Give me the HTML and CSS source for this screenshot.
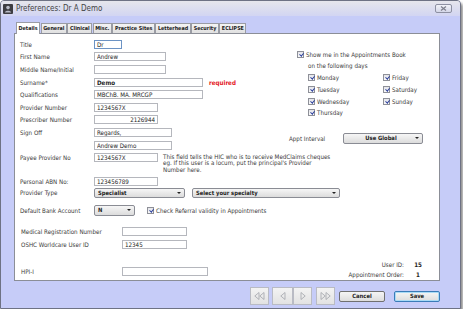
FILE: index.html
```html
<!DOCTYPE html>
<html lang="en">
<head>
  <meta charset="UTF-8" />
  <title>Preferences: Dr A Demo</title>
  <link rel="stylesheet" href="styles.css">
</head>
<body>

  <div class="window">
    <div class="titlebar">
      <svg class="app-icon" width="10" height="10" viewBox="0 0 10 10">
        <rect x="0" y="0" width="10" height="10" rx="1" fill="#3d3d42"/>
        <circle cx="5" cy="3.6" r="1.8" fill="#b9bcc8"/>
        <path d="M1.8 8.6 C2.2 6.2 7.8 6.2 8.2 8.6 Z" fill="#b9bcc8"/>
      </svg>
      <span class="title">Preferences: Dr A Demo</span>
      <span class="close">
        <svg width="7" height="5" viewBox="0 0 7 5"><path d="M1 0.5 L6 4.5 M6 0.5 L1 4.5" stroke="#7d7f8c" stroke-width="1.2"/></svg>
      </span>
    </div>

    <!-- Tabs -->
    <div class="tabs">
      <span class="tab active">Details</span>
      <span class="tab">General</span>
      <span class="tab">Clinical</span>
      <span class="tab">Misc.</span>
      <span class="tab">Practice Sites</span>
      <span class="tab">Letterhead</span>
      <span class="tab">Security</span>
      <span class="tab">ECLIPSE</span>
    </div>

    <div class="panel">
      <div class="top">
        <div class="form-grid">
          <label>Title</label>
          <div><input class="w-title focus" value="Dr"></div>
          <label>First Name</label>
          <div><input class="w-name" value="Andrew"></div>
          <label>Middle Name/Initial</label>
          <div><input class="w-name" value=""></div>
          <label>Surname*</label>
          <div class="cell"><input class="w-long bold" value="Demo"><span class="required">required</span></div>
          <label>Qualifications</label>
          <div><input class="w-long" value="MBChB. MA. MRCGP"></div>
          <label>Provider Number</label>
          <div><input class="w-num" value="1234567X"></div>
          <label>Prescriber Number</label>
          <div><input class="w-num right" value="2126944"></div>
          <label>Sign Off</label>
          <div><input class="w-sign" value="Regards,"></div>
          <label></label>
          <div><input class="w-sign" value="Andrew Demo"></div>
        </div>

        <div class="appt">
          <div class="show"><span class="cb"></span>Show me in the Appointments Book</div>
          <div class="show-sub">on the following days</div>
          <div class="days">
            <div class="day"><span class="cb"></span>Monday</div>
            <div class="day"><span class="cb"></span>Friday</div>
            <div class="day"><span class="cb"></span>Tuesday</div>
            <div class="day"><span class="cb"></span>Saturday</div>
            <div class="day"><span class="cb"></span>Wednesday</div>
            <div class="day"><span class="cb"></span>Sunday</div>
            <div class="day"><span class="cb"></span>Thursday</div>
          </div>
          <div class="interval">
            <label>Appt Interval</label>
            <div class="select w-interval"><span>Use Global</span><i class="caret"></i></div>
          </div>
        </div>
      </div>

      <div class="row payee">
        <label>Payee Provider No</label>
        <input class="w-num" value="1234567X">
        <p class="note">This field tells the HIC who is to receive MedClaims cheques<br>
          eg. If this user is a locum, put the principal's Provider<br>
          Number here.</p>
      </div>
      <div class="row abn">
        <label>Personal ABN No:</label>
        <input class="w-num" value="123456789">
      </div>
      <div class="row ptype">
        <label>Provider Type</label>
        <div class="select w-spec left"><span>Specialist</span><i class="caret"></i></div>
        <div class="select w-specialty left"><span>Select your specialty</span><i class="caret"></i></div>
      </div>
      <div class="row bank">
        <label>Default Bank Account</label>
        <div class="select w-bank left"><span>N</span><i class="caret"></i></div>
        <span class="cb"></span><span class="cb-text">Check Referral validity in Appointments</span>
      </div>

      <div class="lower">
        <div class="lower-left">
          <div class="lrow med">
            <label>Medical Registration Number</label>
            <input class="w-reg" value="">
          </div>
          <div class="lrow oshc">
            <label>OSHC Worldcare User ID</label>
            <input class="w-reg" value="12345">
          </div>
          <div class="lrow hpi">
            <label>HPI-I</label>
            <input class="w-hpi" value="">
          </div>
        </div>
        <div class="user-info">
          <span class="k">User ID:</span><b>15</b>
          <span class="k">Appointment Order:</span><b>1</b>
        </div>
      </div>
    </div>

    <div class="footer">
      <button class="nav first">
        <svg width="11" height="8" viewBox="0 0 11 8"><path d="M5 0.5 L0.8 4 L5 7.5 Z M10 0.5 L5.8 4 L10 7.5 Z" fill="none" stroke="#a2a4ab" stroke-width="0.8"/></svg>
      </button>
      <button class="nav prev">
        <svg width="6" height="8" viewBox="0 0 6 8"><path d="M5 0.5 L0.8 4 L5 7.5 Z" fill="none" stroke="#a2a4ab" stroke-width="0.8"/></svg>
      </button>
      <button class="nav next">
        <svg width="6" height="8" viewBox="0 0 6 8"><path d="M1 0.5 L5.2 4 L1 7.5 Z" fill="none" stroke="#a2a4ab" stroke-width="0.8"/></svg>
      </button>
      <button class="nav last">
        <svg width="11" height="8" viewBox="0 0 11 8"><path d="M1 0.5 L5.2 4 L1 7.5 Z M6 0.5 L10.2 4 L6 7.5 Z" fill="none" stroke="#a2a4ab" stroke-width="0.8"/></svg>
      </button>
      <button class="btn cancel">Cancel</button>
      <button class="btn save">Save</button>
    </div>
  </div>

</body>
</html>
```

FILE: styles.css
```css
body {
  margin: 0;
  padding: 0;
  font-family: 'DejaVu Sans Condensed', 'DejaVu Sans', sans-serif;
  font-size: 6.2px;
  color: #3a3a3a;
  background: #fff;
}

.window {
  width: 461px;
  height: 309px;
  box-sizing: border-box;
  border: 1px solid #6e7284;
  border-radius: 4px 4px 0 0;
  background: #c6ccf8;
  box-shadow: 2px 3px 3px rgba(0,0,0,0.45);
  display: flex;
  flex-direction: column;
}

/* Titulek */
.titlebar {
  height: 15px;
  display: flex;
  align-items: center;
  padding: 0 8px 0 2px;
  background: linear-gradient(#e6e6ec, #d2d5f2);
  border-radius: 3px 3px 0 0;
}

.app-icon {
  margin-right: 3px;
}

.title {
  font-family: 'DejaVu Sans Condensed', 'DejaVu Sans', sans-serif;
  font-size: 8px;
  color: #444;
}

.close {
  margin-left: auto;
  width: 17px;
  height: 9px;
  box-sizing: border-box;
  border: 1px solid #8d90a2;
  border-radius: 2px;
  background: linear-gradient(#f1f2f8, #d4d7e8);
  display: flex;
  align-items: center;
  justify-content: center;
}

/* Zalozky */
.tabs {
  display: flex;
  align-items: flex-end;
  margin-top: 6px;
  padding-left: 15px;
  height: 11px;
  position: relative;
  z-index: 1;
}

.tab {
  height: 9px;
  line-height: 9px;
  padding: 0 1.5px;
  border: 1px solid #9a9ca4;
  border-bottom: none;
  background: linear-gradient(#f4f4f4, #e0e0e0);
  font-weight: bold;
  font-size: 5.4px;
  color: #222;
  margin-right: 0.5px;
}

.tab.active {
  height: 11px;
  line-height: 10px;
  background: #fff;
  margin-bottom: -1px;
}

.panel {
  margin: 0 20px 0 13px;
  height: 248px;
  box-sizing: border-box;
  background: #fff;
  border: 1px solid #8b8e97;
  padding: 4px 0 0 5px;
  display: flex;
  flex-direction: column;
}

input {
  font-family: inherit;
  font-size: 6.2px;
  color: #222;
  height: 9px;
  box-sizing: border-box;
  border: 1px solid #b5b7bd;
  padding: 0 2px;
  margin: 0;
  background: #fff;
  outline: none;
}

input.focus { border-color: #6c93c4; }
input.bold { font-weight: bold; }
input.right { text-align: right; }

.w-title { width: 28px; }
.w-name { width: 72px; }
.w-long { width: 109px; }
.w-num { width: 64px; }
.w-sign { width: 78px; }
.w-reg { width: 65px; }
.w-hpi { width: 86px; }

.top {
  display: flex;
}

.form-grid {
  width: 269px;
  display: grid;
  grid-template-columns: 74px auto;
  grid-auto-rows: 12.6px;
  align-items: center;
}

.cell {
  display: flex;
  align-items: center;
}

.required {
  color: #e3141b;
  font-weight: bold;
  margin-left: 6px;
}

/* Zaskrtavatka */
.cb {
  display: inline-block;
  width: 7px;
  height: 7px;
  box-sizing: border-box;
  border: 1px solid #8e9098;
  background: linear-gradient(#e4e5ea, #fafafa);
  position: relative;
  flex-shrink: 0;
}

.cb::after {
  content: "";
  position: absolute;
  left: 1.6px;
  top: 0;
  width: 1.6px;
  height: 3.4px;
  border-right: 1px solid #2b3f9c;
  border-bottom: 1px solid #2b3f9c;
  transform: rotate(40deg);
}

.appt {
  padding-top: 13px;
}

.show {
  display: flex;
  align-items: center;
  margin-left: 8px;
  height: 7px;
}

.show .cb { margin-right: 2px; }

.show-sub {
  margin: 4px 0 0 19px;
}

.days {
  display: grid;
  grid-template-columns: 75px auto;
  grid-auto-rows: 11.7px;
  align-items: center;
  margin: 3px 0 0 19px;
}

.day {
  display: flex;
  align-items: center;
}

.day .cb { margin-right: 2px; }

.interval {
  display: flex;
  align-items: center;
  margin-top: 14px;
}

.interval label {
  width: 54px;
}

/* Rozbalovaci pole */
.select {
  height: 11px;
  box-sizing: border-box;
  border: 1px solid #8a8c94;
  border-radius: 2px;
  background: linear-gradient(#f6f6f6, #dcdcdc);
  display: flex;
  align-items: center;
  padding: 0 3px;
  font-weight: bold;
  font-size: 5.8px;
  color: #222;
}

.select span {
  flex: 1;
  text-align: center;
}

.select.left span {
  text-align: left;
}

.caret {
  width: 0;
  height: 0;
  border-left: 2px solid transparent;
  border-right: 2px solid transparent;
  border-top: 2.5px solid #222;
}

.w-interval { width: 80px; }
.w-spec { width: 91px; height: 10px; }
.w-specialty { width: 148px; height: 10px; margin-left: 7px; }
.w-bank { width: 41px; }

.row {
  display: flex;
  align-items: center;
}

.row label {
  width: 74px;
  flex-shrink: 0;
}

.payee {
  align-items: flex-start;
  margin-top: 2px;
}

.payee label {
  line-height: 9px;
}

.note {
  margin: 0.5px 0 0 5px;
  line-height: 6.6px;
}

.abn { margin-top: 3px; }
.ptype { margin-top: 2px; }
.bank { margin-top: 7px; }

.bank .cb { margin-left: 12px; margin-right: 2px; }

.lower {
  display: flex;
  align-items: flex-end;
  flex: 1;
  padding-bottom: 2px;
}

.lower-left {
  align-self: flex-start;
  margin-top: 11px;
}

.lrow {
  display: flex;
  align-items: center;
}

.lrow label {
  width: 101px;
  padding-left: 1px;
}

.oshc { margin-top: 4px; }
.hpi { margin-top: 18px; }

.user-info {
  margin-left: auto;
  margin-right: 13px;
  display: grid;
  grid-template-columns: auto 16px;
  column-gap: 6px;
  row-gap: 3px;
  line-height: 7px;
}

.user-info .k { text-align: right; }
.user-info b { text-align: center; color: #222; }

/* Spodni tlacitka */
.footer {
  display: flex;
  align-items: center;
  justify-content: flex-end;
  padding-right: 20px;
  margin-top: 6px;
}

button {
  font-family: inherit;
  margin: 0;
  padding: 0;
  cursor: pointer;
}

.nav {
  width: 19px;
  height: 18px;
  box-sizing: border-box;
  border: 1px solid #b9bbc4;
  background: linear-gradient(#f3f3f3, #e2e2e2);
  display: flex;
  align-items: center;
  justify-content: center;
}

.nav.prev { width: 21px; margin-left: 3px; }
.nav.last { margin-left: 4px; }

.btn {
  width: 46px;
  height: 11px;
  box-sizing: border-box;
  border: 1px solid #707070;
  border-radius: 2px;
  background: linear-gradient(#f5f5f5, #dddddd);
  font-weight: bold;
  font-size: 5.8px;
  color: #222;
}

.cancel { margin-left: 4px; }

.save {
  margin-left: 9px;
  border-color: #3a7cb8;
  box-shadow: inset 0 0 0 1px #a9dbf6;
}
```
